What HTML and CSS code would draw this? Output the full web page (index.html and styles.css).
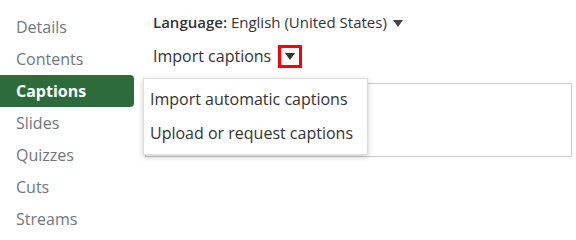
FILE: index.html
```html
<!DOCTYPE html>
<html lang="en">
<head>
    <meta charset="UTF-8">
    <title>Captions</title>
    <link rel="stylesheet" href="styles.css">
</head>
<body>
    <div class="layout">
        <ul class="side-nav">
            <li>Details</li>
            <li>Contents</li>
            <li class="active">Captions</li>
            <li>Slides</li>
            <li>Quizzes</li>
            <li>Cuts</li>
            <li>Streams</li>
        </ul>
        <div class="main">
            <div class="language">
                <b>Language:</b> English (United States)
                <span class="caret"></span>
            </div>
            <div class="import-row">
                Import captions
                <span class="caret-box"><span class="caret"></span></span>
            </div>
            <div class="panel-wrap">
                <div class="panel"></div>
                <!-- menu abierto -->
                <ul class="menu">
                    <li>Import automatic captions</li>
                    <li>Upload or request captions</li>
                </ul>
            </div>
        </div>
    </div>
</body>
</html>
```

FILE: styles.css
```css
body {
    margin: 0;
    font-family: 'Open Sans', 'Noto Sans', sans-serif;
    font-size: 16px;
    color: #333;
    background: #fff;
}

.layout {
    display: flex;
}

.side-nav {
    list-style: none;
    margin: 0;
    padding: 11px 0 0 0;
    width: 134px;
}

.side-nav li {
    height: 32px;
    line-height: 32px;
    padding-left: 16px;
    color: #707780;
    border-radius: 0 4px 4px 0;
}

.side-nav li.active {
    background-color: #2e6b3b;
    color: #fff;
    font-weight: bold;
}

.main {
    flex: 1;
    padding: 9px 4px 0 11px;
}

.language {
    height: 26px;
    line-height: 26px;
    padding-left: 8px;
    font-size: 15px;
}

.language b {
    font-weight: 600;
}

.language .caret {
    margin-left: 2px;
}

.caret {
    display: inline-block;
    width: 0;
    height: 0;
    margin-left: 6px;
    vertical-align: middle;
    border-left: 5px solid transparent;
    border-right: 5px solid transparent;
    border-top: 7px solid #444;
}

.import-row {
    display: flex;
    align-items: center;
    height: 26px;
    margin-top: 8px;
    padding-left: 8px;
}

.caret-box {
    display: inline-flex;
    align-items: center;
    justify-content: center;
    width: 18px;
    height: 17px;
    margin-left: 7px;
    border: 3px solid #f00;
}

.caret-box .caret {
    margin-left: 0;
    border-top-color: #333;
}

.panel-wrap {
    position: relative;
    margin-top: 14px;
}

.panel {
    height: 72px;
    border: 1px solid #ccc;
}

.menu {
    position: absolute;
    top: -5px;
    left: -2px;
    list-style: none;
    margin: 0;
    padding: 3px 0 4px;
    width: 223px;
    background: #fff;
    border: 1px solid #ddd;
    box-shadow: 0 2px 6px rgba(0, 0, 0, 0.2);
}

.menu li {
    height: 34px;
    line-height: 34px;
    padding-left: 6px;
    white-space: nowrap;
}
```
